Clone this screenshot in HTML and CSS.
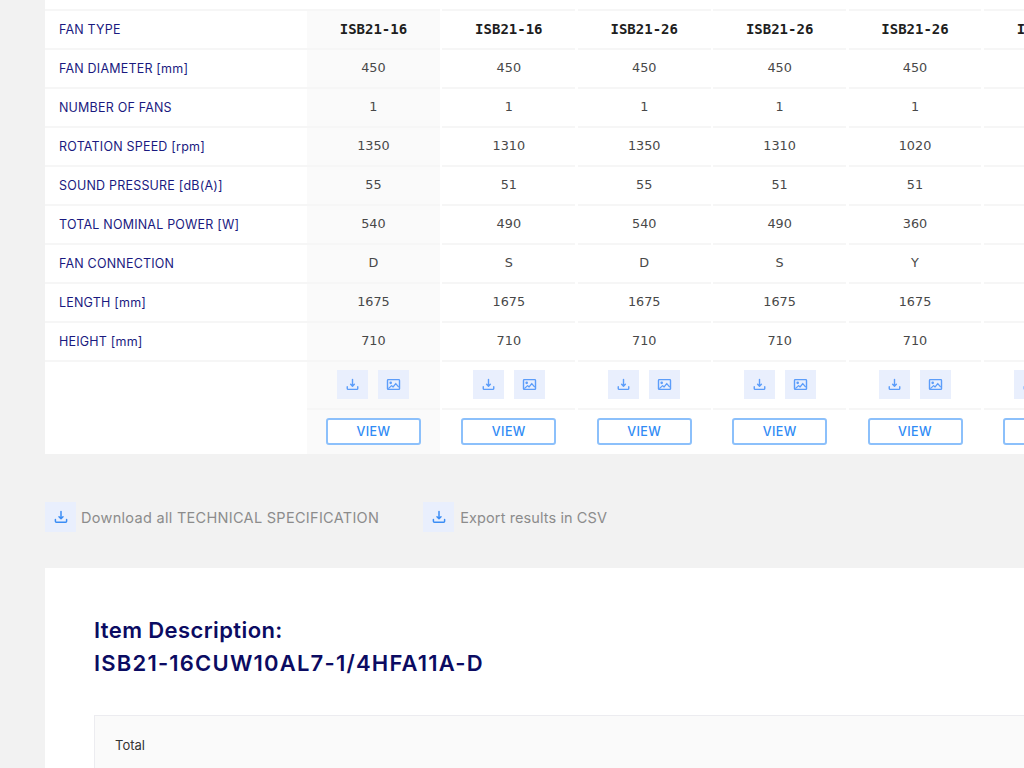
FILE: index.html
```html
<!DOCTYPE html>
<html lang="en">
<head>
<meta charset="utf-8">
<title>Fan comparison</title>
<link rel="stylesheet" href="styles.css">
</head>
<body>
<svg class="defs" width="0" height="0" aria-hidden="true">
  <symbol id="dl" viewBox="0 0 16 16"><path d="M8 2.5v7.2M6 7.8 8 9.8l2-2M2.4 10.4v1.8c0 .6.4 1 1 1h9.2c.6 0 1-.4 1-1v-1.8" fill="none" stroke="currentColor" stroke-width="1.5" stroke-linecap="round" stroke-linejoin="round"/></symbol>
  <symbol id="img" viewBox="0 0 16 16"><rect x="1.6" y="2.8" width="12.8" height="10.4" rx=".8" fill="none" stroke="currentColor" stroke-width="1.5"/><circle cx="5" cy="6.2" r="1.4" fill="currentColor"/><path d="M2.5 12.4 6 9.2l1.6 1.4L10.4 7l3.2 3.8" fill="none" stroke="currentColor" stroke-width="1.4" stroke-linejoin="round"/></symbol>
</svg>
<main class="page">
  <section class="card table-card">
    <div class="row">
      <div class="label">FAN TYPE</div>
      <div class="cell head hl">ISB21-16</div><div class="cell head">ISB21-16</div><div class="cell head">ISB21-26</div><div class="cell head">ISB21-26</div><div class="cell head">ISB21-26</div><div class="cell head">ISB21-26</div>
    </div>
    <div class="row">
      <div class="label">FAN DIAMETER [mm]</div>
      <div class="cell hl">450</div><div class="cell">450</div><div class="cell">450</div><div class="cell">450</div><div class="cell">450</div><div class="cell">450</div>
    </div>
    <div class="row">
      <div class="label">NUMBER OF FANS</div>
      <div class="cell hl">1</div><div class="cell">1</div><div class="cell">1</div><div class="cell">1</div><div class="cell">1</div><div class="cell">1</div>
    </div>
    <div class="row">
      <div class="label">ROTATION SPEED [rpm]</div>
      <div class="cell hl">1350</div><div class="cell">1310</div><div class="cell">1350</div><div class="cell">1310</div><div class="cell">1020</div><div class="cell">1020</div>
    </div>
    <div class="row">
      <div class="label">SOUND PRESSURE [dB(A)]</div>
      <div class="cell hl">55</div><div class="cell">51</div><div class="cell">55</div><div class="cell">51</div><div class="cell">51</div><div class="cell">51</div>
    </div>
    <div class="row">
      <div class="label">TOTAL NOMINAL POWER [W]</div>
      <div class="cell hl">540</div><div class="cell">490</div><div class="cell">540</div><div class="cell">490</div><div class="cell">360</div><div class="cell">360</div>
    </div>
    <div class="row">
      <div class="label">FAN CONNECTION</div>
      <div class="cell hl">D</div><div class="cell">S</div><div class="cell">D</div><div class="cell">S</div><div class="cell">Y</div><div class="cell">Y</div>
    </div>
    <div class="row">
      <div class="label">LENGTH [mm]</div>
      <div class="cell hl">1675</div><div class="cell">1675</div><div class="cell">1675</div><div class="cell">1675</div><div class="cell">1675</div><div class="cell">1675</div>
    </div>
    <div class="row">
      <div class="label">HEIGHT [mm]</div>
      <div class="cell hl">710</div><div class="cell">710</div><div class="cell">710</div><div class="cell">710</div><div class="cell">710</div><div class="cell">710</div>
    </div>
    <div class="row row-icons">
      <div class="label"></div>
      <div class="cell hl"><span class="ico"><svg><use href="#dl"/></svg></span><span class="ico"><svg><use href="#img"/></svg></span></div>
      <div class="cell"><span class="ico"><svg><use href="#dl"/></svg></span><span class="ico"><svg><use href="#img"/></svg></span></div>
      <div class="cell"><span class="ico"><svg><use href="#dl"/></svg></span><span class="ico"><svg><use href="#img"/></svg></span></div>
      <div class="cell"><span class="ico"><svg><use href="#dl"/></svg></span><span class="ico"><svg><use href="#img"/></svg></span></div>
      <div class="cell"><span class="ico"><svg><use href="#dl"/></svg></span><span class="ico"><svg><use href="#img"/></svg></span></div>
      <div class="cell"><span class="ico"><svg><use href="#dl"/></svg></span><span class="ico"><svg><use href="#img"/></svg></span></div>
    </div>
    <div class="row row-view">
      <div class="label"></div>
      <div class="cell hl"><button class="view">VIEW</button></div>
      <div class="cell"><button class="view">VIEW</button></div>
      <div class="cell"><button class="view">VIEW</button></div>
      <div class="cell"><button class="view">VIEW</button></div>
      <div class="cell"><button class="view">VIEW</button></div>
      <div class="cell"><button class="view">VIEW</button></div>
    </div>
  </section>
  <div class="actions">
    <a class="action"><span class="ico ico-lg"><svg><use href="#dl"/></svg></span>Download all TECHNICAL SPECIFICATION</a>
    <a class="action action-csv"><span class="ico ico-lg"><svg><use href="#dl"/></svg></span>Export results in CSV</a>
  </div>
  <section class="card detail-card">
    <h2 class="title"><span class="title-a">Item Description:</span><br><span class="title-b">ISB21-16CUW10AL7-1/4HFA11A-D</span></h2>
    <div class="total-box"><span class="total">Total</span></div>
  </section>
</main>
</body>
</html>
```
FILE: styles.css
```css
html, body {
  margin: 0;
  height: 768px;
  overflow: hidden;
  background: #f2f2f2;
}
body {
  font-family: "Inter", "Liberation Sans", sans-serif;
  color: #333;
}
.defs { display: block; height: 0; }
.page {
  width: 1200px;
  padding-left: 45px;
}
.card { background: #fff; }
.table-card { padding-top: 9px; }
.row {
  display: grid;
  grid-template-columns: 262px repeat(6, 135.4px);
  height: 39px;
}
.row-icons { height: 48px; }
.row-view { height: 46px; }
.label, .cell {
  display: flex;
  align-items: center;
  box-sizing: border-box;
  border-top: 2px solid #f6f6f6;
  padding-bottom: 1px;
}
.label {
  padding-left: 14px;
  font-size: 12.5px;
  letter-spacing: .2px;
  color: #1a1a80;
}
.row-view .label { border-top: 0; }
.cell {
  justify-content: center;
  margin-right: 2.5px;
  font-family: "DejaVu Sans", sans-serif;
  font-size: 12.8px;
  color: #484848;
  padding-bottom: 3px;
}
.hl { background: #fafafa; }
.head {
  font-family: "DejaVu Sans Mono", monospace;
  font-weight: 700;
  color: #1e1e1e;
  font-size: 14px;
  padding-bottom: 2px;
}
.row-icons .cell { gap: 10px; padding-bottom: 1px; }
.ico {
  display: flex;
  align-items: center;
  justify-content: center;
  width: 31px;
  height: 29px;
  background: #e9effd;
  color: #5c9dfa;
}
.ico svg { width: 15px; height: 15px; }
.row-view .cell { padding-bottom: 1px; }
.view {
  width: 95px;
  height: 27px;
  box-sizing: border-box;
  padding: 0;
  border: 2px solid #8cc0fb;
  border-radius: 3px;
  background: #fff;
  color: #2f8bf5;
  font: 500 12.5px "Inter", "Liberation Sans", sans-serif;
  letter-spacing: .4px;
}
.actions {
  display: flex;
  gap: 44px;
  height: 102px;
  padding-top: 12px;
  align-items: center;
}
.action {
  display: flex;
  align-items: center;
  gap: 5px;
  font-size: 14.5px;
  letter-spacing: .3px;
  color: #8c8c8c;
}
.action-csv { letter-spacing: .1px; gap: 6px; }
.ico-lg { background: #e9effd; width: 31px; height: 30px; }
.ico-lg svg { width: 16px; height: 16px; color: #3b8df5; }
.detail-card {
  padding: 46px 0 0 49px;
  height: 300px;
}
.title {
  margin: 0;
  font-size: 22px;
  line-height: 33px;
  font-weight: 600;
  color: #0b0b62;
}
.title-a { letter-spacing: .4px; }
.title-b { letter-spacing: 1.2px; }
.total-box {
  margin-top: 35px;
  padding: 18px 20px;
  border: 1px solid #ececf0;
  background: #fafafa;
  height: 100px;
}
.total { font-size: 13px; color: #333; }
```
